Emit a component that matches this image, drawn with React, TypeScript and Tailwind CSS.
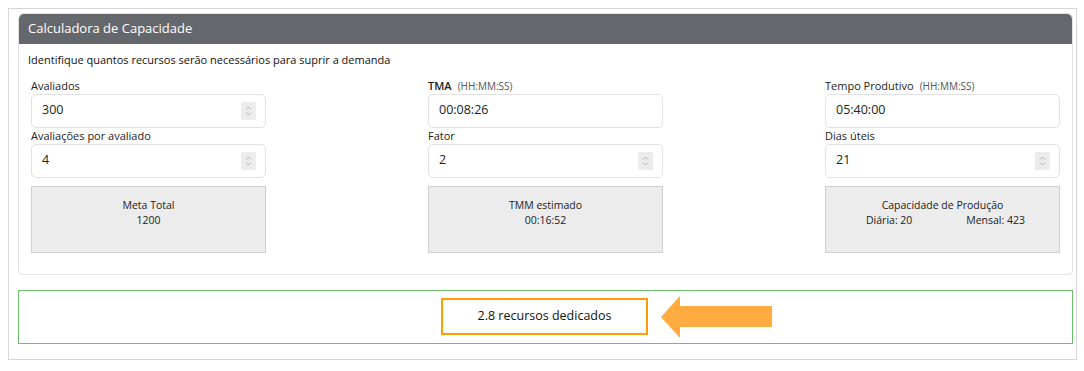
const font = { fontFamily: '"Open Sans", "Liberation Sans", sans-serif' };

const Spinner = () => (
  <span className="flex h-[18px] w-[15px] items-center justify-center bg-[#ececec]">
    <svg width="7" height="12" viewBox="0 0 7 12" fill="none" stroke="#b0b0b0" strokeWidth="1">
      <path d="M1 4.5 L3.5 2 L6 4.5" />
      <path d="M1 7.5 L3.5 10 L6 7.5" />
    </svg>
  </span>
);

const Field = ({
  label,
  hint,
  value,
  spin,
  bold,
}: {
  label: string;
  hint?: string;
  value: string;
  spin?: boolean;
  bold?: boolean;
}) => (
  <div className="flex flex-col">
    <label className={`h-[16px] text-[11px] leading-[16px] text-[#222] ${bold ? 'font-semibold' : ''}`}>
      {label}
      {hint && <span className="ml-[6px] text-[10px] font-normal text-[#555]">({hint})</span>}
    </label>
    <div className="flex h-[34px] items-center justify-between rounded-[5px] border border-[#e2e2e2] bg-white pl-[10px] pr-[9px]">
      <span className="text-[12.5px] text-[#222]">{value}</span>
      {spin && <Spinner />}
    </div>
  </div>
);

const ResultBox = ({ children }: { children: React.ReactNode }) => (
  <div className="mt-[8px] flex h-[67px] flex-col items-center border border-[#d0d0d0] bg-[#ececec] pt-[11px] text-[10.5px] leading-[15px] text-[#222]">
    {children}
  </div>
);

const App = () => {
  return (
    <div className="h-[371px] w-[1084px] bg-white pl-[8px] pt-[8px]" style={font}>
      <div className="h-[352px] w-[1069px] border border-[#d6d6d6] px-[9px] pt-[4px]">
        <div className="w-[1055px] rounded-t-[6px] rounded-b-[4px] border border-[#e2e2e2]">
          <div className="flex h-[30px] items-center rounded-t-[5px] bg-[#64686c] px-[9px] text-[13px] text-white">
            Calculadora de Capacidade
          </div>
          <div className="px-[9px] pt-[8px] text-[11px] text-[#111]">
            Identifique quantos recursos serão necessários para suprir a demanda
          </div>
          <div className="mt-[9px] flex gap-[162px] pb-[21px] pl-[12px]">
            <div className="flex w-[235px] flex-col">
              <Field label="Avaliados" value="300" spin />
              <Field label="Avaliações por avaliado" value="4" spin />
              <ResultBox>
                <span>Meta Total</span>
                <span>1200</span>
              </ResultBox>
            </div>
            <div className="flex w-[235px] flex-col">
              <Field label="TMA" hint="HH:MM:SS" value="00:08:26" bold />
              <Field label="Fator" value="2" spin />
              <ResultBox>
                <span>TMM estimado</span>
                <span>00:16:52</span>
              </ResultBox>
            </div>
            <div className="flex w-[235px] flex-col">
              <Field label="Tempo Produtivo" hint="HH:MM:SS" value="05:40:00" />
              <Field label="Dias úteis" value="21" spin />
              <ResultBox>
                <span>Capacidade de Produção</span>
                <div className="flex w-full justify-between pl-[40px] pr-[34px]">
                  <span>Diária: 20</span>
                  <span>Mensal: 423</span>
                </div>
              </ResultBox>
            </div>
          </div>
        </div>
        <div className="mt-[15px] flex h-[54px] w-[1055px] items-center border border-[#6cbf6c] pl-[422px]">
          <div className="flex h-[37px] w-[207px] items-center justify-center border-[2.5px] border-[#ff9d00] text-[12.5px] text-[#111]">
            2.8 recursos dedicados
          </div>
          <svg className="ml-[13px]" width="111" height="42" viewBox="0 0 111 42">
            <polygon points="0,21 19,0 19,10 111,10 111,31 19,31 19,42" fill="#ffab40" />
          </svg>
        </div>
      </div>
    </div>
  );
};

export default App;
